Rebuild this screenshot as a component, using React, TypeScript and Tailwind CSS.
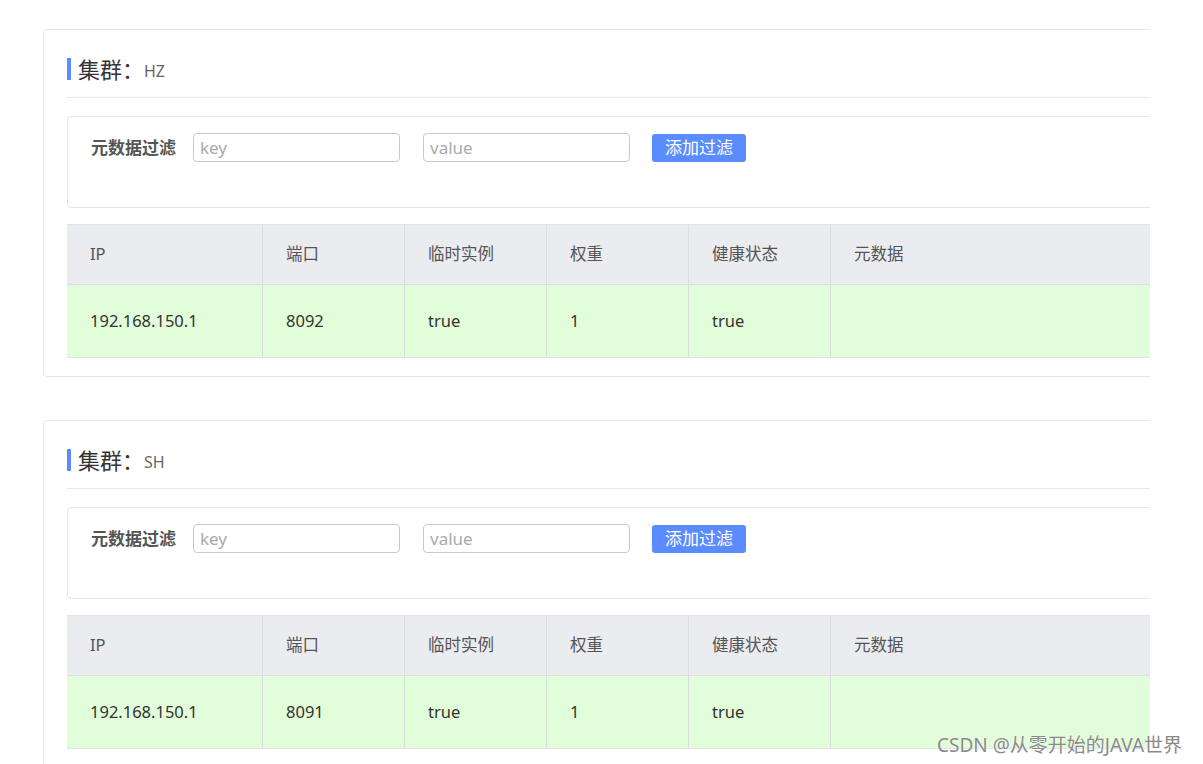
import React from 'react';

const font = { fontFamily: '"Noto Sans", "Noto Sans CJK SC", sans-serif' };

const columns = [
  { label: 'IP', w: 'w-[196px]' },
  { label: '端口', w: 'w-[142px]' },
  { label: '临时实例', w: 'w-[142px]' },
  { label: '权重', w: 'w-[142px]' },
  { label: '健康状态', w: 'w-[142px]' },
  { label: '元数据', w: 'flex-1' },
];

const clusters = [
  { name: 'HZ', row: ['192.168.150.1', '8092', 'true', '1', 'true', ''] },
  { name: 'SH', row: ['192.168.150.1', '8091', 'true', '1', 'true', ''] },
];

const ClusterCard = ({ name, row }: { name: string; row: string[] }) => (
  <div className="w-[1200px] border border-[#e6e6e9] rounded-[4px] bg-white pl-[23px] pr-[20px] pt-[28px] pb-[18px]">
    {/* title */}
    <div className="flex items-center h-[22px]">
      <div className="w-[4px] h-[22px] bg-[#5b8cff]" />
      <span className="ml-[7px] text-[22px] leading-none text-[#333]">集群：</span>
      <span className="text-[16px] leading-none text-[#666] mt-[3px]">{name}</span>
    </div>
    <div className="mt-[17px] h-px bg-[#e8e8ec]" />

    {/* filter */}
    <div className="mt-[18px] h-[92px] border border-[#e4e4e8] rounded-[4px] pl-[23px] pt-[16px]">
      <div className="flex items-center h-[29px]">
        <span className="text-[17px] font-bold text-[#555] w-[102px] whitespace-nowrap">元数据过滤</span>
        <input
          placeholder="key"
          className="w-[207px] h-[29px] border border-[#c8c8cf] rounded-[4px] px-[6px] text-[17px] text-[#333] placeholder:text-[#aaa] outline-none"
        />
        <input
          placeholder="value"
          className="ml-[23px] w-[207px] h-[29px] border border-[#c8c8cf] rounded-[4px] px-[6px] text-[17px] text-[#333] placeholder:text-[#aaa] outline-none"
        />
        <button className="ml-[22px] w-[94px] h-[28px] bg-[#5b8cff] rounded-[3px] text-white text-[17px] leading-none">
          添加过滤
        </button>
      </div>
    </div>

    {/* table */}
    <div className="mt-[16px] border-t border-b border-[#e4e4e8]">
      <div className="flex h-[59px] bg-[#ebecf0]">
        {columns.map((c, i) => (
          <div
            key={c.label}
            className={`${c.w} flex items-center pl-[23px] text-[16.5px] text-[#555] ${i < columns.length - 1 ? 'border-r border-[#dcdde2]' : ''}`}
          >
            {c.label}
          </div>
        ))}
      </div>
      <div className="flex h-[73px] bg-[#e2fdd9] border-t border-[#dcdde2]">
        {columns.map((c, i) => (
          <div
            key={c.label}
            className={`${c.w} flex items-center pl-[23px] text-[16.5px] text-[#333] ${i < columns.length - 1 ? 'border-r border-[#d8dfd6]' : ''}`}
          >
            {row[i]}
          </div>
        ))}
      </div>
    </div>
  </div>
);

export default function App() {
  return (
    <div className="relative w-[1203px] h-[764px] bg-white overflow-hidden" style={font}>
      <div className="w-[1150px] h-full overflow-hidden pt-[29px] pl-[43px] flex flex-col gap-[43px]">
        {clusters.map((c) => (
          <ClusterCard key={c.name} name={c.name} row={c.row} />
        ))}
      </div>
      <div
        className="absolute left-[937px] top-[731px] text-[19px] text-[#8a8a8a] whitespace-nowrap"
        style={{ textShadow: '0 0 1px #fff' }}
      >
        CSDN @从零开始的JAVA世界
      </div>
    </div>
  );
}
